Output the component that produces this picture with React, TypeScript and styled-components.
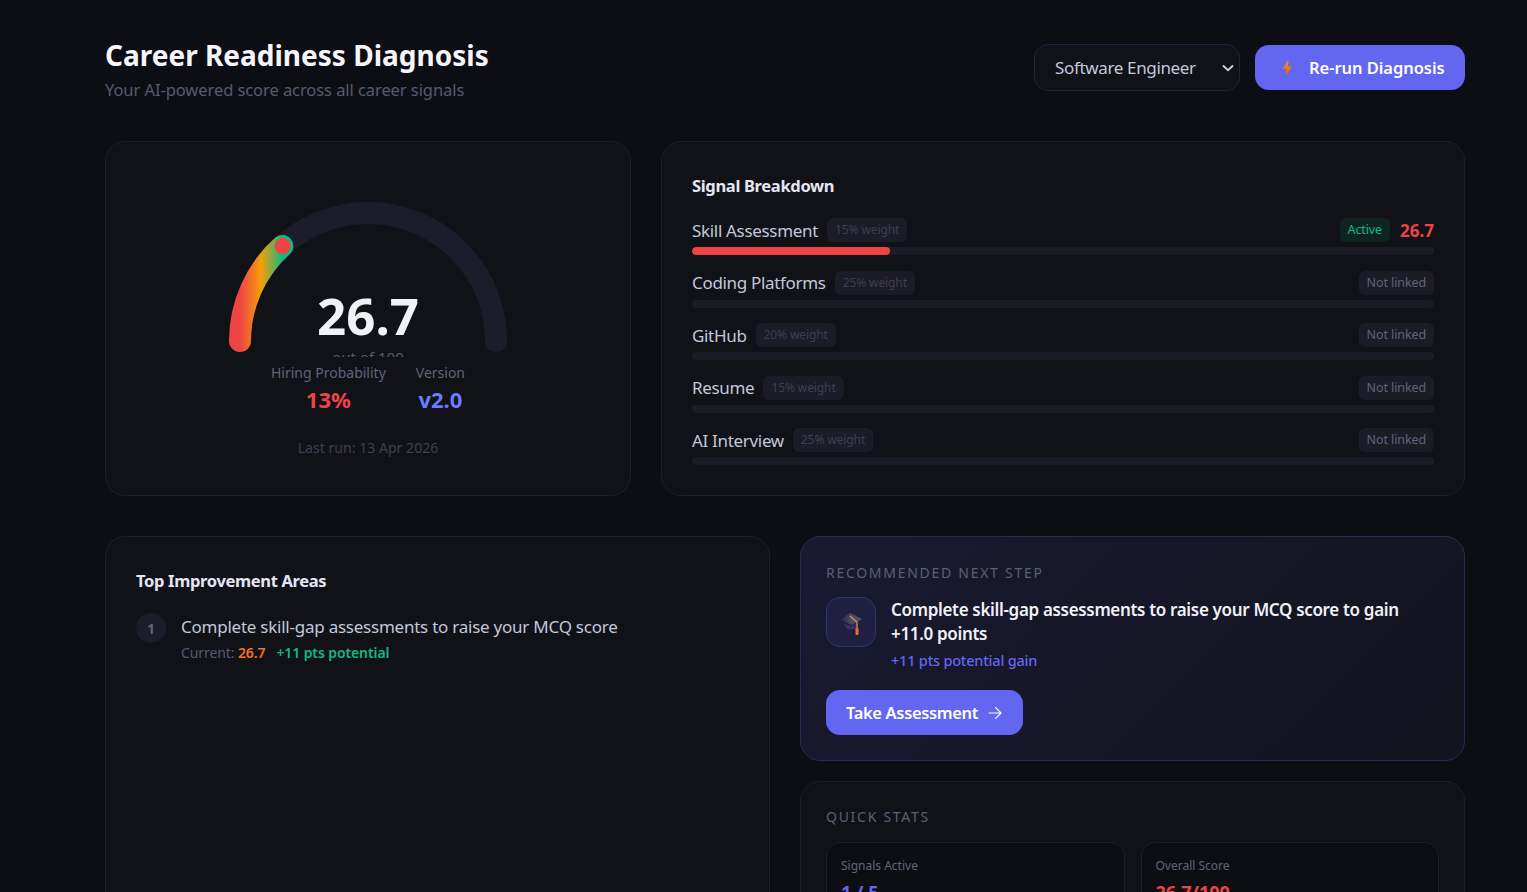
import styled, { createGlobalStyle } from 'styled-components';

const GlobalStyle = createGlobalStyle`
  html, body {
    margin: 0;
    height: 892px;
    overflow: hidden;
    background: #0d0e13;
  }
  * { box-sizing: border-box; }
  body {
    font-family: "Noto Sans", "Open Sans", sans-serif;
    color: #f1f1f8;
  }
`;

const Page = styled.main`
  padding: 32px 62px 0 105px;
`;

const Header = styled.header`
  display: flex;
  align-items: flex-start;
  justify-content: space-between;
  height: 70px;
  margin-bottom: 39px;
`;

const TitleBlock = styled.div`
  padding-top: 4px;
`;

const PageTitle = styled.h1`
  margin: 0;
  font-size: 28px;
  line-height: 38px;
  font-weight: 700;
  color: #f5f5fb;
`;

const PageSub = styled.p`
  margin: 4px 0 0;
  font-size: 16.5px;
  line-height: 24px;
  letter-spacing: -0.07px;
  color: #565a6e;
`;

const HeaderActions = styled.div`
  display: flex;
  align-items: center;
  gap: 15px;
  margin-top: 12px;
`;

const RoleSelect = styled.select`
  appearance: none;
  width: 206px;
  height: 47px;
  padding: 0 0 0 20px;
  background-color: #111218;
  background-image: url("data:image/svg+xml,%3Csvg xmlns='http://www.w3.org/2000/svg' width='14' height='8' viewBox='0 0 14 8'%3E%3Cpath d='M2 1.5 L7 6.2 L12 1.5' fill='none' stroke='%23cfcfcf' stroke-width='2'/%3E%3C/svg%3E");
  background-repeat: no-repeat;
  background-position: right 4px center;
  border: 1px solid #222340;
  border-radius: 14px;
  color: #c3c8d8;
  font-family: inherit;
  font-size: 17px;
  letter-spacing: -0.35px;
`;

const PrimaryButton = styled.button`
  display: inline-flex;
  align-items: center;
  height: 45px;
  border: 0;
  border-radius: 14px;
  background: #6366f1;
  color: #fff;
  font-family: inherit;
  font-weight: 600;
  font-size: 16.5px;
  letter-spacing: -0.3px;
  white-space: nowrap;
`;

const RerunButton = styled(PrimaryButton)`
  width: 210px;
  padding: 0 20px 0 26px;
  gap: 16px;
  letter-spacing: -0.05px;
`;

const TopGrid = styled.section`
  display: grid;
  grid-template-columns: 526px 804px;
  gap: 30px;
  height: 355px;
  margin-bottom: 40px;
`;

const Card = styled.div`
  background: #111218;
  border: 1px solid #1e1f2b;
  border-radius: 20px;
`;

const GaugeCard = styled(Card)`
  display: flex;
  flex-direction: column;
  align-items: center;
  padding-top: 45px;
`;

const GaugeSvg = styled.svg`
  display: block;
  width: 280px;
  height: 170px;
`;

const GaugeValue = styled.text`
  font-size: 51px;
  font-weight: 700;
  fill: #f1f1f8;
  text-anchor: middle;
`;

const GaugeCaption = styled.text`
  font-size: 15px;
  fill: #565a6e;
  text-anchor: middle;
`;

const GaugeStats = styled.div`
  display: flex;
  gap: 30px;
  margin-top: 5px;
`;

const GaugeStat = styled.div`
  text-align: center;
`;

const GaugeStatLabel = styled.div`
  font-size: 14px;
  line-height: 22px;
  color: #60637a;
`;

const GaugeStatValue = styled.div<{ $color: string }>`
  font-size: 22px;
  line-height: 31px;
  font-weight: 700;
  color: ${(p) => p.$color};
`;

const LastRun = styled.div`
  margin-top: 22px;
  font-size: 14.1px;
  line-height: 22px;
  color: #403e50;
`;

const SignalCard = styled(Card)`
  padding: 30px;
`;

const CardTitle = styled.h2`
  margin: 0 0 19px;
  font-size: 16.5px;
  line-height: 27px;
  font-weight: 700;
  letter-spacing: -0.33px;
  color: #e4e6f2;
`;

const SignalRow = styled.div`
  margin-bottom: 15.5px;
  &:last-child {
    margin-bottom: 0;
  }
`;

const SignalHead = styled.div`
  display: flex;
  align-items: center;
  height: 24px;
  margin-bottom: 5px;
`;

const SignalName = styled.span`
  font-size: 17px;
  letter-spacing: -0.32px;
  color: #c3c8d8;
`;

const Pill = styled.span<{ $tone?: 'muted' | 'active' | 'status' }>`
  padding: 2px 8px;
  border-radius: 6px;
  font-size: 12.5px;
  line-height: 20px;
  letter-spacing: -0.1px;
  background: ${(p) => (p.$tone === 'active' ? '#10241f' : '#1b1c26')};
  color: ${(p) => (p.$tone === 'active' ? '#10b981' : p.$tone === 'status' ? '#60637a' : '#403e50')};
`;

const WeightPill = styled(Pill)`
  margin-left: 9px;
  font-size: 12px;
`;

const SignalRight = styled.div`
  display: flex;
  align-items: center;
  gap: 10px;
  margin-left: auto;
`;

const SignalScore = styled.span`
  padding-top: 1px;
  font-size: 17px;
  font-weight: 700;
  color: #ef4444;
`;

const Track = styled.div`
  height: 8px;
  border-radius: 4px;
  background: #1b1c26;
  overflow: hidden;
`;

const TrackFill = styled.div`
  height: 100%;
  border-radius: 4px;
  background: #ef4444;
`;

const BottomGrid = styled.section`
  display: grid;
  grid-template-columns: 665px 665px;
  gap: 30px;
`;

const ImprovementCard = styled(Card)`
  padding: 30px;
`;

const ImprovementRow = styled.div`
  display: flex;
  gap: 15px;
`;

const RankBadge = styled.div`
  flex: none;
  display: flex;
  align-items: center;
  justify-content: center;
  width: 30px;
  height: 30px;
  border-radius: 50%;
  background: #1c1d2b;
  color: #60637a;
  font-size: 14px;
  font-weight: 700;
`;

const ImprovementText = styled.div`
  font-size: 17px;
  line-height: 27px;
  letter-spacing: -0.24px;
  color: #c3c8d8;
`;

const ImprovementMeta = styled.div`
  display: flex;
  gap: 11px;
  font-size: 14px;
  line-height: 26px;
  letter-spacing: -0.1px;
  color: #565a6e;
`;

const MetaScore = styled.b`
  font-weight: 600;
  color: #f97316;
`;

const MetaGain = styled.span`
  font-weight: 600;
  color: #10b981;
`;

const SideColumn = styled.div`
  display: flex;
  flex-direction: column;
  gap: 20px;
`;

const NextStepCard = styled(Card)`
  height: 225px;
  padding: 25px;
  background: linear-gradient(135deg, #191932 0%, #13141d 100%);
  border-color: #2a2b55;
`;

const SectionLabel = styled.div`
  font-size: 14px;
  line-height: 22px;
  letter-spacing: 1.72px;
  text-transform: uppercase;
  color: #5c6074;
`;

const StepBody = styled.div`
  display: flex;
  gap: 15px;
  margin-top: 13px;
`;

const StepIcon = styled.div`
  flex: none;
  display: flex;
  align-items: center;
  justify-content: center;
  width: 50px;
  height: 50px;
  border-radius: 14px;
  background: #201f40;
  border: 1px solid #273a70;
`;

const StepText = styled.div`
  padding-top: 1px;
`;

const StepTitle = styled.div`
  font-size: 17px;
  line-height: 24px;
  font-weight: 600;
  letter-spacing: -0.33px;
  color: #f1f1f8;
`;

const StepGain = styled.div`
  margin-top: 2px;
  font-size: 14.5px;
  line-height: 24px;
  font-weight: 500;
  letter-spacing: -0.2px;
  color: #6366f1;
`;

const TakeButton = styled(PrimaryButton)`
  gap: 9px;
  margin-top: 18px;
  padding: 0 20px;
  letter-spacing: -0.35px;
`;

const StatsCard = styled(Card)`
  padding: 24px 25px 30px;
`;

const StatsGrid = styled.div`
  display: grid;
  grid-template-columns: 1fr 1fr;
  gap: 16px;
  margin-top: 14px;
`;

const StatBox = styled.div`
  padding: 14px;
  background: #0d0e13;
  border: 1px solid #1e1f2b;
  border-radius: 14px;
`;

const StatLabel = styled.div`
  font-size: 12px;
  line-height: 18px;
  color: #60637a;
`;

const StatValue = styled.div<{ $color: string }>`
  margin-top: 4px;
  font-size: 18px;
  line-height: 26px;
  font-weight: 700;
  color: ${(p) => p.$color};
`;

const signals = [
  { name: 'Skill Assessment', weight: 15, score: 26.7 },
  { name: 'Coding Platforms', weight: 25 },
  { name: 'GitHub', weight: 20 },
  { name: 'Resume', weight: 15 },
  { name: 'AI Interview', weight: 25 },
];

function Gauge() {
  return (
    <GaugeSvg viewBox="0 0 280 170">
      <defs>
        <linearGradient id="gaugeGrad" x1="0" y1="0" x2="1" y2="0">
          <stop offset="0%" stopColor="#ef4444" />
          <stop offset="50%" stopColor="#f59e0b" />
          <stop offset="100%" stopColor="#10b981" />
        </linearGradient>
      </defs>
      <path d="M12 154 A128 128 0 0 1 268 154" fill="none" stroke="#1c1d2b" strokeWidth="22" strokeLinecap="round" />
      <path d="M12 154 A128 128 0 0 1 54.4 59" fill="none" stroke="url(#gaugeGrad)" strokeWidth="22" strokeLinecap="round" />
      <circle cx="54.6" cy="59" r="8" fill="#ef4444" />
      <GaugeValue x="140" y="148">26.7</GaugeValue>
      <GaugeCaption x="140" y="176">out of 100</GaugeCaption>
    </GaugeSvg>
  );
}

function BoltIcon() {
  return (
    <svg width="12" height="18" viewBox="0 0 12 18">
      <defs>
        <linearGradient id="boltGrad" x1="0" y1="0" x2="0" y2="1">
          <stop offset="0%" stopColor="#f59e0b" />
          <stop offset="100%" stopColor="#ea580c" />
        </linearGradient>
      </defs>
      <path d="M7.5 0.5 L1.5 10 L5.2 10 L4.5 17.5 L10.8 7.5 L7 7.5 Z" fill="url(#boltGrad)" />
    </svg>
  );
}

function CapIcon() {
  return (
    <svg width="24" height="26" viewBox="0 0 24 26">
      <defs>
        <linearGradient id="capGrad" x1="0" y1="0" x2="1" y2="0">
          <stop offset="0%" stopColor="#4b4a62" stopOpacity="0" />
          <stop offset="50%" stopColor="#4b4a62" />
          <stop offset="100%" stopColor="#55546c" />
        </linearGradient>
      </defs>
      <path d="M5 15 L13 17 L19 14 L19 19 Q12 22 7 19 Z" fill="#3d2f6b" />
      <path d="M1 11 L11 4 L23 10 L13 16 Z" fill="url(#capGrad)" />
      <path d="M11 7 L18 13 L18 19" fill="none" stroke="#d9973a" strokeWidth="1.2" />
      <rect x="16.5" y="19" width="3" height="7" rx="1.2" fill="#ea6f2a" />
    </svg>
  );
}

export default function App() {
  return (
    <>
      <GlobalStyle />
      <Page>
        <Header>
          <TitleBlock>
            <PageTitle>Career Readiness Diagnosis</PageTitle>
            <PageSub>Your AI-powered score across all career signals</PageSub>
          </TitleBlock>
          <HeaderActions>
            <RoleSelect defaultValue="Software Engineer">
              <option>Software Engineer</option>
            </RoleSelect>
            <RerunButton>
              <BoltIcon />
              Re-run Diagnosis
            </RerunButton>
          </HeaderActions>
        </Header>

        <TopGrid>
          <GaugeCard>
            <Gauge />
            <GaugeStats>
              <GaugeStat>
                <GaugeStatLabel>Hiring Probability</GaugeStatLabel>
                <GaugeStatValue $color="#ef4444">13%</GaugeStatValue>
              </GaugeStat>
              <GaugeStat>
                <GaugeStatLabel>Version</GaugeStatLabel>
                <GaugeStatValue $color="#6b7cff">v2.0</GaugeStatValue>
              </GaugeStat>
            </GaugeStats>
            <LastRun>Last run: 13 Apr 2026</LastRun>
          </GaugeCard>

          <SignalCard>
            <CardTitle>Signal Breakdown</CardTitle>
            {signals.map((s) => (
              <SignalRow key={s.name}>
                <SignalHead>
                  <SignalName>{s.name}</SignalName>
                  <WeightPill>{s.weight}% weight</WeightPill>
                  <SignalRight>
                    {s.score ? (
                      <>
                        <Pill $tone="active">Active</Pill>
                        <SignalScore>{s.score}</SignalScore>
                      </>
                    ) : (
                      <Pill $tone="status">Not linked</Pill>
                    )}
                  </SignalRight>
                </SignalHead>
                <Track>
                  {s.score ? <TrackFill style={{ width: `${s.score}%` }} /> : null}
                </Track>
              </SignalRow>
            ))}
          </SignalCard>
        </TopGrid>

        <BottomGrid>
          <ImprovementCard>
            <CardTitle>Top Improvement Areas</CardTitle>
            <ImprovementRow>
              <RankBadge>1</RankBadge>
              <div>
                <ImprovementText>Complete skill-gap assessments to raise your MCQ score</ImprovementText>
                <ImprovementMeta>
                  <span>
                    Current: <MetaScore>26.7</MetaScore>
                  </span>
                  <MetaGain>+11 pts potential</MetaGain>
                </ImprovementMeta>
              </div>
            </ImprovementRow>
          </ImprovementCard>

          <SideColumn>
            <NextStepCard>
              <SectionLabel>Recommended Next Step</SectionLabel>
              <StepBody>
                <StepIcon>
                  <CapIcon />
                </StepIcon>
                <StepText>
                  <StepTitle>Complete skill-gap assessments to raise your MCQ score to gain +11.0 points</StepTitle>
                  <StepGain>+11 pts potential gain</StepGain>
                </StepText>
              </StepBody>
              <TakeButton>
                Take Assessment
                <svg width="16" height="16" viewBox="0 0 24 24" fill="none" stroke="currentColor" strokeWidth="1.8" strokeLinecap="round" strokeLinejoin="round">
                  <path d="M3 12h18M13 4l8 8-8 8" />
                </svg>
              </TakeButton>
            </NextStepCard>

            <StatsCard>
              <SectionLabel>Quick Stats</SectionLabel>
              <StatsGrid>
                <StatBox>
                  <StatLabel>Signals Active</StatLabel>
                  <StatValue $color="#6366f1">1 / 5</StatValue>
                </StatBox>
                <StatBox>
                  <StatLabel>Overall Score</StatLabel>
                  <StatValue $color="#ef4444">26.7/100</StatValue>
                </StatBox>
              </StatsGrid>
            </StatsCard>
          </SideColumn>
        </BottomGrid>
      </Page>
    </>
  );
}
